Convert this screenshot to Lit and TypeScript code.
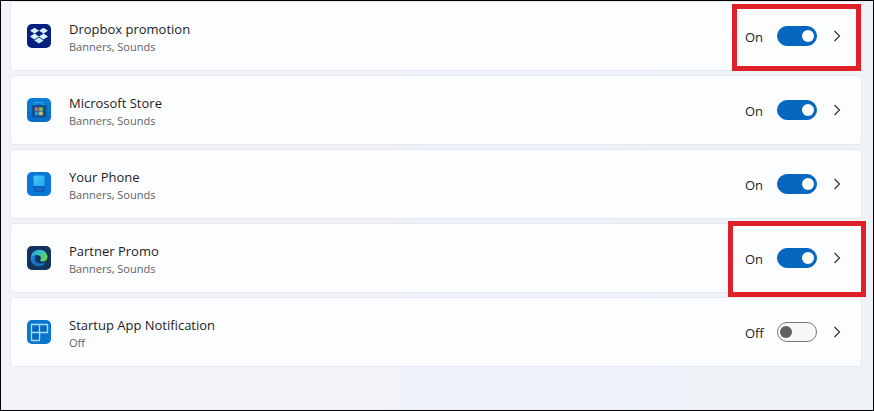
import { LitElement, html, css, svg, nothing } from "lit";
import { customElement, property, state } from "lit/decorators.js";
import { classMap } from "lit/directives/class-map.js";

interface AppEntry {
  id: string;
  name: string;
  on: boolean;
  mark?: "inner" | "outer";
}

const dropbox = svg`
  <rect width="24" height="24" rx="5" fill="#06207f"/>
  <path fill="#d9f0ff" d="M7.500 3.800 12 6.700 7.500 9.600 3 6.700zM16.500 3.800 21 6.700 16.500 9.600 12 6.700zM7.500 9.600 12 12.500 7.500 15.400 3 12.500zM16.500 9.600 21 12.500 16.500 15.400 12 12.500zM12 13.400 16.600 16.400 12 19.600 7.400 16.400z"/>`;

const store = svg`
  <defs><linearGradient id="st" x1="0" y1="0" x2="0" y2="1">
    <stop offset="0" stop-color="#0a80d8"/><stop offset="1" stop-color="#0a6cc6"/>
  </linearGradient></defs>
  <rect width="24" height="24" rx="5" fill="url(#st)"/>
  <path d="M7.500 7V5.500a1 1 0 0 1 1-1h6.500a1 1 0 0 1 1 1V7" fill="none" stroke="#2ba6ea" stroke-width="1.200"/>
  <path d="M5 7h14.500v10.500a2 2 0 0 1-2 2H7a2 2 0 0 1-2-2z" fill="#0f4f96"/>
  <path d="M7.800 9.300h3.700V13H7.800z" fill="#c9694f"/><path d="M12.100 9.300h3.700V13h-3.700z" fill="#86b84c"/>
  <path d="M7.800 13.600h3.700v3.700H7.800z" fill="#2b9ce0"/><path d="M12.100 13.600h3.700v3.700h-3.700z" fill="#dfbf52"/>`;

const phone = svg`
  <defs><linearGradient id="ph" x1="0" y1="0" x2="1" y2="1">
    <stop offset="0" stop-color="#4cc8f6"/><stop offset="1" stop-color="#22a8ef"/>
  </linearGradient></defs>
  <rect width="24" height="24" rx="5" fill="#0877d6"/>
  <rect x="6.500" y="3.500" width="11" height="10.500" rx="1" fill="url(#ph)"/>
  <path d="M6.500 14h11v4.500a1.500 1.500 0 0 1-1.500 1.500H8a1.500 1.500 0 0 1-1.500-1.500z" fill="#0a62bc"/>
  <path d="M9 17h6" stroke="#1c7ed0" stroke-width="1"/>`;

const edge = svg`
  <defs>
    <linearGradient id="e1" x1="0" y1="0" x2="1" y2=".5">
      <stop offset="0" stop-color="#279fe6"/><stop offset=".55" stop-color="#35c2c0"/><stop offset="1" stop-color="#62d850"/>
    </linearGradient>
    <linearGradient id="e2" x1="0" y1="0" x2="1" y2="1">
      <stop offset="0" stop-color="#1f8fe0"/><stop offset="1" stop-color="#1266b4"/>
    </linearGradient>
  </defs>
  <rect width="24" height="24" rx="5" fill="#10335f"/>
  <path d="M3.800 12.500C3.800 7 7.500 3.800 12.200 3.800c5 0 8.300 3.400 8.300 7.300 0 2.700-1.900 4.400-4.400 4.400-1.700 0-2.900-.6-2.900-1.300 0-.5.8-.9.800-2.100 0-1.700-1.700-3.100-4-3.100-3 0-5.200 1.500-6.200 3.500z" fill="url(#e1)"/>
  <path d="M3.800 12.500C4.400 10.300 6.600 9 9.500 9c-1.900 1-2.700 2.500-2.700 4.200 0 3.300 2.700 6.700 7 6.900-.6.200-1.200.200-1.800.200-4.500 0-8.200-3.300-8.200-7.800z" fill="url(#e2)"/>
  <path d="M9.500 9.800c-1 .9-1.400 2-1.400 3.200 0 2.800 2.500 4.600 5.600 4.600 1.900 0 3.500-.4 5.200-1.500-1.200 2.100-3.200 3.700-5.400 4-4.200-.2-6.700-3.600-6.700-6.900 0-1.400 1-2.900 2.700-3.400z" fill="#1778c8"/>`;

const startup = svg`
  <rect width="24" height="24" rx="5" fill="#0a76d0"/>
  <path d="M4.500 4.500h16v8h-8v8h-8zM12.500 4.500v8M4.500 12.500h8" fill="#0c68ba" stroke="#9fe0fd" stroke-width="1.300" stroke-linejoin="round"/>`;

const icons: Record<string, unknown> = { dropbox, store, phone, edge, startup };

@customElement("notification-row")
export class NotificationRow extends LitElement {
  @property({ attribute: false }) entry!: AppEntry;
  @state() private on = false;

  static styles = css`
    :host { display: block; }
    .card {
      box-sizing: border-box;
      min-height: 70px;
      display: flex;
      align-items: center;
      padding: 0 12px 0 16px;
      background: #fcfdfe;
      border: 1px solid #e6e9ee;
      border-radius: 4px;
    }
    .icon { width: 24px; height: 24px; flex: none; }
    .text {
      flex: 1;
      min-width: 0;
      margin-left: 18px;
      padding-top: 2px;
      display: flex;
      flex-direction: column;
    }
    .name { font-size: 13px; line-height: 20px; color: #1d1d1f; }
    .detail { font-size: 11px; line-height: 16px; color: #626366; }
    .controls { position: relative; display: flex; align-items: center; }
    .state { width: 32px; font-size: 13px; line-height: 20px; padding-top: 2px; color: #1d1d1f; }
    .switch {
      appearance: none;
      box-sizing: border-box;
      width: 40px;
      height: 20px;
      margin: 0;
      padding: 0 2px;
      border: 1px solid #77787a;
      border-radius: 10px;
      background: #f6f7f8;
      display: flex;
      align-items: center;
    }
    .switch::before {
      content: "";
      width: 12px;
      height: 12px;
      border-radius: 50%;
      background: #5f6062;
    }
    .switch:checked {
      justify-content: flex-end;
      background: #0567c0;
      border-color: #0567c0;
    }
    .switch:checked::before { background: #fff; }
    .more {
      width: 24px;
      height: 32px;
      margin-left: 8px;
      padding: 0;
      border: 0;
      background: none;
      display: grid;
      place-items: center;
    }
    .chevron { width: 12px; height: 12px; }
    .mark {
      position: absolute;
      border: 5px solid #df2028;
      pointer-events: none;
    }
    .inner { inset: -16px -12px -19px -13px; }
    .outer { inset: -21px -17px -23px -17px; }
  `;

  willUpdate(changed: Map<string, unknown>) {
    if (changed.has("entry")) this.on = this.entry.on;
  }

  render() {
    const { id, name, mark } = this.entry;
    return html`
      <div class="card">
        <svg class="icon" viewBox="0 0 24 24" aria-hidden="true">${icons[id]}</svg>
        <label class="text" for="toggle">
          <span class="name">${name}</span>
          <span class="detail">${this.on ? "Banners, Sounds" : "Off"}</span>
        </label>
        <div class="controls">
          <label class="state" for="toggle">${this.on ? "On" : "Off"}</label>
          <input
            class="switch"
            id="toggle"
            type="checkbox"
            role="switch"
            .checked=${this.on}
            @change=${(e: Event) => (this.on = (e.target as HTMLInputElement).checked)}
          />
          <button class="more" type="button" aria-label="${name} settings">
            <svg class="chevron" viewBox="0 0 12 12" aria-hidden="true">
              <path d="M3.500 1 8.500 6l-5 5" fill="none" stroke="#303133" stroke-width="1.200"/>
            </svg>
          </button>
          ${mark
            ? html`<div class=${classMap({ mark: true, inner: mark === "inner", outer: mark === "outer" })}></div>`
            : nothing}
        </div>
      </div>
    `;
  }
}

@customElement("app-root")
export class AppRoot extends LitElement {
  private entries: AppEntry[] = [
    { id: "dropbox", name: "Dropbox promotion", on: true, mark: "inner" },
    { id: "store", name: "Microsoft Store", on: true },
    { id: "phone", name: "Your Phone", on: true },
    { id: "edge", name: "Partner Promo", on: true, mark: "outer" },
    { id: "startup", name: "Startup App Notification", on: false },
  ];

  static styles = css`
    :host {
      display: block;
      font-family: "Segoe UI", "Open Sans", "Noto Sans", sans-serif;
    }
    .page {
      box-sizing: border-box;
      min-height: 100vh;
      padding: 0 11px 0 9px;
      border: 1px solid #000;
      background: linear-gradient(90deg, #f2f3f6 0%, #f1f3f6 44%, #eff1fc 48%, #eff1fc 70%, #eef3f8 78%, #eef3f8 100%);
    }
    .list {
      margin: 0;
      padding: 0;
      list-style: none;
      display: flex;
      flex-direction: column;
      gap: 4px;
    }
  `;

  render() {
    return html`
      <main class="page">
        <ul class="list">
          ${this.entries.map((entry) => html`<li><notification-row .entry=${entry}></notification-row></li>`)}
        </ul>
      </main>
    `;
  }
}
